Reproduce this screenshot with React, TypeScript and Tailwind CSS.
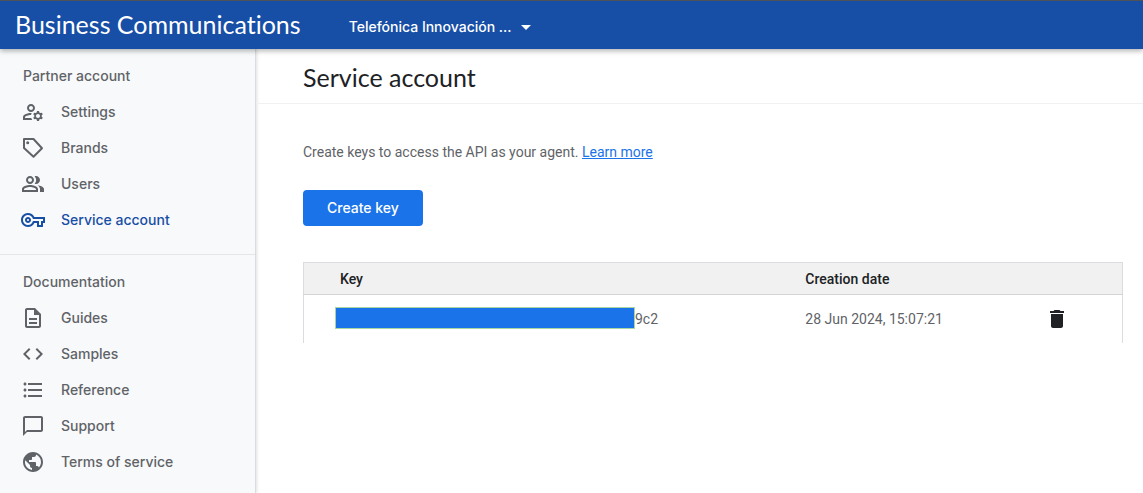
import { ReactNode } from "react";
import {
  MdArrowDropDown,
  MdChatBubbleOutline,
  MdCode,
  MdDelete,
  MdFormatListBulleted,
  MdOutlineDescription,
  MdOutlineManageAccounts,
  MdOutlinePeopleAlt,
  MdOutlineVpnKey,
  MdPublic,
} from "react-icons/md";

type NavItem = {
  label: string;
  icon: ReactNode;
  active?: boolean;
};

function TagIcon() {
  return (
    <svg viewBox="0 0 24 24" width="24" height="24" fill="none">
      <path
        d="M3 3v9l9.500 8.800L21 12.200 12.500 3H3z"
        stroke="currentColor"
        strokeWidth="2"
        strokeLinejoin="round"
      />
      <circle cx="6.700" cy="6.700" r="1.500" fill="currentColor" />
    </svg>
  );
}

const accountItems: NavItem[] = [
  { label: "Settings", icon: <MdOutlineManageAccounts size={24} /> },
  { label: "Brands", icon: <TagIcon /> },
  { label: "Users", icon: <MdOutlinePeopleAlt size={24} /> },
  {
    label: "Service account",
    icon: <MdOutlineVpnKey size={24} />,
    active: true,
  },
];

const docItems: NavItem[] = [
  { label: "Guides", icon: <MdOutlineDescription size={24} /> },
  { label: "Samples", icon: <MdCode size={24} /> },
  { label: "Reference", icon: <MdFormatListBulleted size={24} /> },
  { label: "Support", icon: <MdChatBubbleOutline size={24} /> },
  { label: "Terms of service", icon: <MdPublic size={24} /> },
];

const keys = [{ suffix: "9c2", created: "28 Jun 2024, 15:07:21" }];

function NavSection({ title, items }: { title: string; items: NavItem[] }) {
  return (
    <section>
      <h2 className="flex h-9 items-center pl-[23px]">{title}</h2>
      <ul>
        {items.map((item) => (
          <li key={item.label}>
            <a
              href="#"
              aria-current={item.active ? "page" : undefined}
              className={`flex h-9 items-center gap-4 pl-[21px] ${
                item.active ? "text-[#174ea6]" : ""
              }`}
            >
              {item.icon}
              {item.label}
            </a>
          </li>
        ))}
      </ul>
    </section>
  );
}

function Header() {
  return (
    <header className="z-10 flex h-[49px] items-center border-t border-[#4f5357] bg-[#174ea6] pl-[15px] text-white shadow-[0_2px_5px_rgba(0,0,0,0.3)]">
      <span className="font-['Lato',sans-serif] text-[25px] [font-variant-ligatures:none]">
        Business Communications
      </span>
      <button className="ml-12 flex items-center gap-0.5 pt-1 font-['Inter',sans-serif] text-sm font-medium">
        Telefónica Innovación ...
        <MdArrowDropDown size={24} />
      </button>
    </header>
  );
}

function KeyTable() {
  return (
    <table className="mt-9 w-full table-fixed border-x border-t border-[#dadce0] text-left text-sm">
      <thead className="bg-[#f1f1f1] text-[#202124]">
        <tr className="h-8 border-b border-[#d4d4d4]">
          <th className="w-[57%] pl-9 font-medium">Key</th>
          <th className="pl-[35px] font-medium">Creation date</th>
          <td className="w-[16%]" />
        </tr>
      </thead>
      <tbody>
        {keys.map((key) => (
          <tr key={key.suffix} className="h-12">
            <td className="pl-[31px]">
              <div className="flex items-center">
                <span className="mb-0.5 h-[22px] w-[300px] border border-[#a8d5a2] bg-[#1a73e8]" />
                {key.suffix}
              </div>
            </td>
            <td className="pl-[35px]">{key.created}</td>
            <td className="pl-[54px]">
              <button
                aria-label="Delete key"
                className="flex text-[#202124]"
              >
                <MdDelete size={24} />
              </button>
            </td>
          </tr>
        ))}
      </tbody>
    </table>
  );
}

function App() {
  return (
    <div className="flex min-h-screen flex-col bg-white font-['Roboto',sans-serif] text-[#5f6368]">
      <Header />
      <div className="flex flex-1">
        <nav className="w-64 shrink-0 border-r border-[#dadce0] bg-[#f8f9fa] pt-[9px] font-['Inter',sans-serif] text-sm font-medium shadow-[1px_0_3px_rgba(0,0,0,0.12)]">
          <NavSection title="Partner account" items={accountItems} />
          <hr className="mt-4 mb-[9px] border-[#e4e6e9]" />
          <NavSection title="Documentation" items={docItems} />
        </nav>
        <main className="min-w-0 flex-1">
          <div className="flex h-[55px] items-center border-b border-[#f1f1f1] pl-[47px] pt-1">
            <h1 className="font-['Lato',sans-serif] text-[25px] text-[#202124]">
              Service account
            </h1>
          </div>
          <div className="pt-[38px] pr-5 pl-[47px]">
            <p className="text-sm">
              Create keys to access the API as your agent.{" "}
              <a href="#" className="text-[#1a73e8] underline">
                Learn more
              </a>
            </p>
            <button className="mt-7 h-9 rounded bg-[#1a73e8] px-6 font-['Inter',sans-serif] text-sm font-medium text-white">
              Create key
            </button>
            <KeyTable />
          </div>
        </main>
      </div>
    </div>
  );
}

export default App;
